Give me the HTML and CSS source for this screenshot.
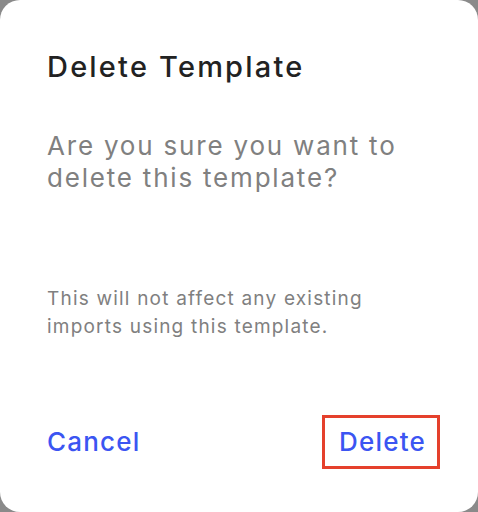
FILE: index.html
```html
<!DOCTYPE html>
<html>
<head>
<meta charset="utf-8">
<link rel="stylesheet" href="styles.css">
</head>
<body>
<div class="dialog">
  <h1 class="title">Delete Template</h1>
  <p class="question">Are you sure you want to delete this template?</p>
  <p class="note">This will not affect any existing imports using this template.</p>
  <div class="actions">
    <button class="btn">Cancel</button>
    <button class="btn btn-focus">Delete</button>
  </div>
</div>
</body>
</html>
```
FILE: styles.css
```css
html, body {
  margin: 0;
  padding: 0;
  background: #8a8a8a;
}
.dialog {
  box-sizing: border-box;
  width: 478px;
  height: 512px;
  background: #ffffff;
  border-radius: 20px;
  padding: 47px 38px 0 47px;
  font-family: Inter, "Liberation Sans", sans-serif;
  display: flex;
  flex-direction: column;
}
.title {
  margin: 0;
  font-size: 29px;
  line-height: 40px;
  font-weight: 500;
  letter-spacing: 2.2px;
  color: #222222;
}
.question {
  margin: 43px 0 0 0;
  font-size: 26px;
  line-height: 32px;
  letter-spacing: 1.8px;
  color: #808080;
  max-width: 380px;
}
.note {
  margin: 91px 0 0 0;
  font-size: 19px;
  line-height: 28px;
  letter-spacing: 1.2px;
  color: #808080;
  max-width: 330px;
}
.actions {
  margin-top: 74px;
  display: flex;
  justify-content: space-between;
  align-items: center;
}
.btn {
  background: none;
  border: 3px solid transparent;
  padding: 7px 11px 7px 14px;
  margin-left: -17px;
  font-family: inherit;
  font-size: 26px;
  font-weight: 500;
  letter-spacing: 1.2px;
  line-height: 34px;
  color: #3b55f2;
  cursor: pointer;
}
.btn-focus {
  margin-left: 0;
  border-color: #e5402c;
}
```
